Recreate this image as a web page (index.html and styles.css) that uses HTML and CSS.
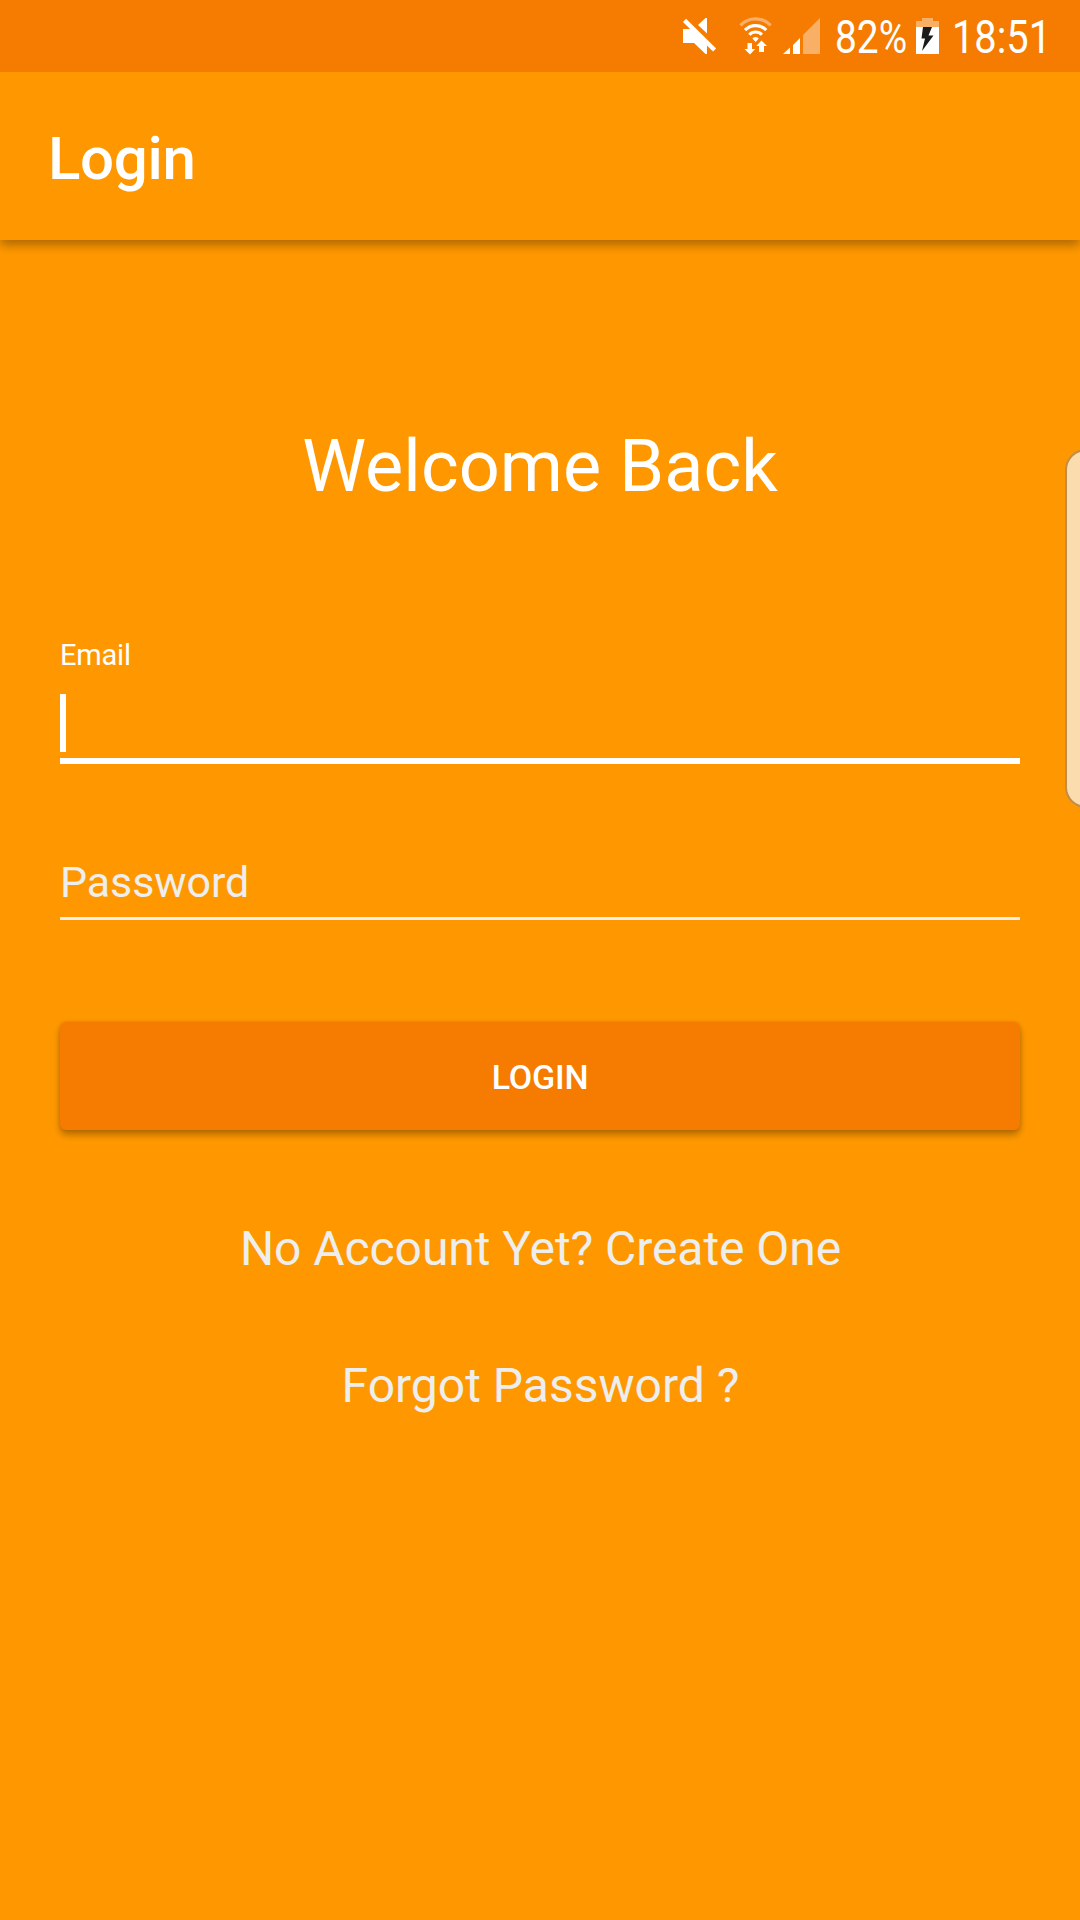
FILE: index.html
```html
<!DOCTYPE html>
<html lang="en">
<head>
<meta charset="utf-8">
<title>Login</title>
<link rel="stylesheet" href="styles.css">
</head>
<body>
<div class="screen">
  <div class="status-bar">
    <svg class="icon-mute" width="36" height="38" viewBox="0 0 36 38" fill="#fff">
      <path d="M1 12H11L25 26V37H23.500L12 26H1Z"/>
      <path d="M16 8 23.500 1H25V16.500Z"/>
      <path d="M2.500 3.400 32.600 33" stroke="#fff" stroke-width="4.400" fill="none"/>
    </svg>
    <svg class="icon-wifi" width="34" height="38" viewBox="0 0 34 38" fill="none" stroke="#fff" stroke-width="3.200">
      <path d="M1.500 8.300A20.800 20.800 0 0 1 31.700 8.300" opacity=".4"/>
      <path d="M6 13.200A14.500 14.500 0 0 1 27.200 13.200"/>
      <path d="M10.300 17.800A8.500 8.500 0 0 1 22.900 17.800"/>
      <path d="M16.600 25 13.400 21.500Q16.600 18.700 19.800 21.500Z" fill="#fff" stroke="none"/>
      <path d="M8.500 26H13V32H16.200L11 37.500 5.500 32H8.500ZM20 35H25V29H28L22.500 23.500 17.300 29H20Z" fill="#fff" stroke="none"/>
    </svg>
    <svg class="icon-signal" width="38" height="38" viewBox="0 0 38 38" fill="#fff">
      <path d="M0 37 7 30.500V37ZM10 37V28L17 21V37Z"/>
      <path d="M20 37V18L37 1V37Z" opacity=".4"/>
    </svg>
    <span class="status-text charge">82%</span>
    <svg class="icon-battery" width="23" height="38" viewBox="0 0 23 38">
      <path d="M6 1H17V4H23V10H0V4H6Z" fill="#fff" opacity=".4"/>
      <path d="M0 10H23V37H0Z" fill="#fff"/>
      <path d="M7 10H16L12.500 18.500H17.500L6 34 9 21.500H5.500Z" fill="#1b1b1b"/>
    </svg>
    <span class="status-text clock">18:51</span>
  </div>
  <header class="app-bar"><h1 class="title">Login</h1></header>
  <main class="content">
    <h2 class="welcome">Welcome Back</h2>
    <div class="field email">
      <span class="label">Email</span>
      <span class="caret"></span>
    </div>
    <div class="field password">Password</div>
    <button class="login-button">LOGIN</button>
    <a class="link signup">No Account Yet? Create One</a>
    <a class="link forgot">Forgot Password ?</a>
  </main>
  <div class="edge-handle"></div>
</div>
</body>
</html>
```
FILE: styles.css
```css
* { box-sizing: border-box; }

body {
  margin: 0;
  background: #ff9800;
  font-family: Roboto, "Liberation Sans", sans-serif;
  color: #fff;
}

.screen {
  position: relative;
  width: 1080px;
  height: 1920px;
  overflow: hidden;
  display: flex;
  flex-direction: column;
}

.status-bar {
  position: relative;
  z-index: 1;
  height: 72px;
  flex: none;
  display: flex;
  align-items: flex-start;
  padding-left: 682px;
  background: #f57c00;
}

.status-bar svg { flex: none; margin-top: 17px; }
.icon-wifi { margin-left: 21px; }
.icon-signal { margin-left: 10px; }
.icon-battery { margin-left: 8px; }

.status-text {
  flex: none;
  font-size: 46px;
  line-height: 75px;
  white-space: nowrap;
  transform: scaleX(.845);
  transform-origin: left;
}

.charge { width: 73px; margin-left: 14px; }
.clock { margin-left: 13px; transform: scaleX(.865); }

.app-bar {
  height: 168px;
  flex: none;
  display: flex;
  align-items: center;
  padding: 5px 48px 0;
  background: #ff9800;
  box-shadow: 0 5px 10px rgba(0, 0, 0, .32);
}

.title {
  margin: 0;
  font-size: 60px;
  font-weight: 500;
  line-height: 70px;
  letter-spacing: -.3px;
}

.content {
  display: flex;
  flex-direction: column;
  padding: 185px 60px 0;
}

.welcome {
  margin: 0 0 129px;
  font-size: 72px;
  font-weight: 400;
  line-height: 84px;
  letter-spacing: .08px;
  text-align: center;
}

.field { border-bottom: 3px solid #eee; }

.email {
  height: 126px;
  display: flex;
  flex-direction: column;
  border-bottom: 6px solid #fff;
}

.label { font-size: 29px; line-height: 34px; letter-spacing: -.2px; }
.caret { width: 6px; height: 58px; margin-top: 22px; background: #fff; }

.password {
  height: 62px;
  margin-top: 94px;
  font-size: 43px;
  line-height: 48px;
  letter-spacing: -.1px;
  color: #eee;
}

.login-button {
  height: 108px;
  margin: 102px 0 35px;
  padding: 1px 0 0;
  border: 0;
  border-radius: 6px;
  background: #f57c00;
  box-shadow: 0 5px 7px rgba(0, 0, 0, .28), 0 0 4px rgba(0, 0, 0, .12);
  color: #fff;
  font: 500 34px/40px Roboto, "Liberation Sans", sans-serif;
  letter-spacing: -.2px;
}

.link {
  font-size: 48px;
  line-height: 56px;
  text-align: center;
  color: #eee;
}

.signup { margin-top: 56px; padding-left: 1px; letter-spacing: -.06px; }
.forgot { margin-top: 81px; padding-left: 1px; }

.edge-handle {
  position: absolute;
  top: 449px;
  right: -46px;
  width: 61px;
  height: 359px;
  border: 2px solid #bf8d46;
  border-radius: 21px;
  background: #fbdcae;
}
```
